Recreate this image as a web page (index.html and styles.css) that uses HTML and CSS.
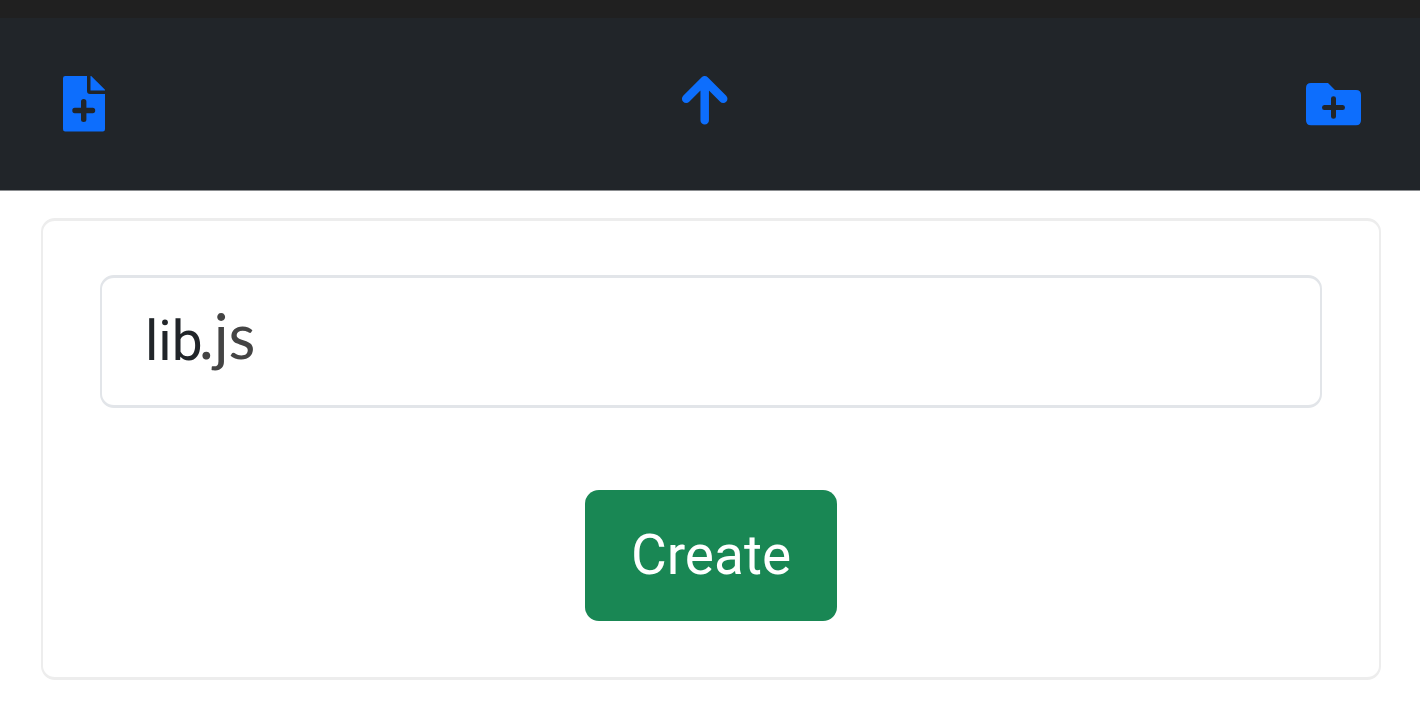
FILE: index.html
```html
<!DOCTYPE html>
<html lang="en">
<head>
<meta charset="utf-8">
<meta name="viewport" content="width=device-width, initial-scale=1">
<title>Create file</title>
<link rel="stylesheet" href="styles.css">
</head>
<body>
<header class="toolbar">
  <button class="icon-button" type="button" aria-label="New file">
    <svg width="42" height="56" viewBox="0 0 42 56" fill="currentColor" aria-hidden="true">
      <path fill-rule="evenodd" d="M2.200 0H24V15Q24 18 27 18H42V53.300Q42 55.500 39.800 55.500H2.200Q0 55.500 0 53.300V2.200Q0 0 2.200 0ZM18 25.500V31.800H11.700Q9.300 31.800 9.300 34.500T11.700 37.200H18V43.500Q18 46 20.700 46T23.400 43.500V37.200H29.700Q32.200 37.200 32.200 34.500T29.700 31.800H23.400V25.500Q23.400 23 20.700 23T18 25.500Z"/>
      <path d="M27.500 0H28.200L42 13.800V14.500H27.500Z"/>
    </svg>
  </button>
  <button class="icon-button" type="button" aria-label="Up one level">
    <svg width="46" height="56" viewBox="0 0 46 56" fill="none" stroke="currentColor" stroke-width="8.500" stroke-linecap="round" stroke-linejoin="round" overflow="visible" aria-hidden="true">
      <path d="M21.700 44.200V4.200M3.200 22.800L21.700 4.200L40.200 22.800"/>
    </svg>
  </button>
  <button class="icon-button" type="button" aria-label="New folder">
    <svg width="56" height="56" viewBox="0 0 56 56" fill="currentColor" aria-hidden="true">
      <path fill-rule="evenodd" d="M5 7H22L29 14H50Q55 14 55 19V44.200Q55 49.200 50 49.200H5Q0 49.200 0 44.200V12Q0 7 5 7ZM25 22.500V29H18.300Q16 29 16 31.500T18.300 34H25V40.500Q25 42.800 27.500 42.800T30 40.500V34H36.700Q39 34 39 31.500T36.700 29H30V22.500Q30 20.300 27.500 20.300T25 22.500Z"/>
    </svg>
  </button>
</header>
<main class="content">
  <form class="card">
    <label class="field">
      <input class="field-name" type="text" value="lib" aria-label="File name">
      <span class="field-extension">.js</span>
    </label>
    <button class="create-button" type="button">Create</button>
  </form>
</main>
</body>
</html>
```
FILE: styles.css
```css
* { box-sizing: border-box; }

body {
  margin: 0;
  background: #fff;
  color: #212529;
  font: 400 55px/83px Roboto, sans-serif;
}

.toolbar {
  display: flex;
  justify-content: space-between;
  align-items: center;
  padding: 58px 58px 58px 63px;
  background: #212529;
  border-top: 18px solid #202020;
  border-bottom: 1px solid #8b8d90;
}

.icon-button {
  display: flex;
  padding: 0;
  border: 0;
  background: none;
  color: #0d6efd;
  cursor: pointer;
}

.content { padding: 27px 39px 40px 41px; }

.card {
  display: flex;
  flex-direction: column;
  align-items: center;
  gap: 82px;
  padding: 54px 57px 56px;
  border: 3px solid #ededed;
  border-width: 3px 2px;
  border-radius: 14px;
}

.field {
  display: flex;
  align-items: flex-start;
  width: 100%;
  padding: 22px 43px;
  border: 3px solid #e2e5e9;
  border-width: 3px 2px;
  border-radius: 14px;
  cursor: text;
}

.field-name {
  width: 57px;
  height: 83px;
  padding: 0;
  border: 0;
  outline: 0;
  background: transparent;
  color: inherit;
  font: inherit;
}

.field-extension {
  margin-left: -3px;
  color: #444;
  font-family: Lato, sans-serif;
  font-size: 62px;
  line-height: 70px;
}

.create-button {
  padding: 24px 46px;
  border: 0;
  border-radius: 14px;
  background: #198754;
  color: #fff;
  font: inherit;
  cursor: pointer;
}
```
